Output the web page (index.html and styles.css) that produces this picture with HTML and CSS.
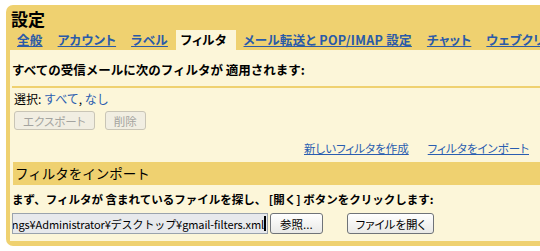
FILE: index.html
```html
<!DOCTYPE html>
<html lang="ja">
<head>
  <meta charset="UTF-8" />
  <title>設定 - フィルタ</title>
  <link rel="stylesheet" href="styles.css">
</head>
<body>
  <div class="settings">
    <h1 class="title">設定</h1>

    <nav class="tabs">
      <a class="tab" href="#">全般</a>
      <a class="tab" href="#">アカウント</a>
      <a class="tab" href="#">ラベル</a>
      <span class="tab active">フィルタ</span>
      <a class="tab" href="#">メール転送と POP/IMAP 設定</a>
      <a class="tab" href="#">チャット</a>
      <a class="tab" href="#">ウェブクリップ</a>
    </nav>

    <div class="panel">
      <div class="intro">すべての受信メールに次のフィルタが 適用されます:</div>

      <div class="filters">
        <div class="select">選択: <a href="#">すべて</a>, <a href="#">なし</a></div>
        <div class="actions">
          <button class="btn" disabled>エクスポート</button>
          <button class="btn" disabled>削除</button>
        </div>
        <div class="links">
          <a href="#">新しいフィルタを作成</a>
          <a href="#">フィルタをインポート</a>
        </div>
      </div>

      <h2 class="section-title">フィルタをインポート</h2>

      <div class="import">
        <p class="hint">まず、フィルタが 含まれているファイルを探し、 [開く] ボタンをクリックします:</p>
        <div class="file-row">
          <div class="file-path"><span>C:¥Documents and Settings¥Administrator¥デスクトップ¥gmail-filters.xml</span><i class="caret"></i></div>
          <button class="btn btn-raised">参照...</button>
          <button class="btn btn-raised open">ファイルを開く</button>
        </div>
      </div>
    </div>
  </div>
</body>
</html>
```

FILE: styles.css
```css
* {
  box-sizing: border-box;
  margin: 0;
  padding: 0;
}

body {
  background: #ffffff;
  color: #000000;
  font-family: "Noto Sans CJK JP", "Liberation Sans", sans-serif;
  font-size: 12px;
  padding: 5px 0 0 6px;
  overflow: hidden;
}

a {
  color: #2a5db0;
}

.settings {
  background: #efd170;
  border-radius: 7px 0 0 7px;
  padding: 0 0 5px 4px;
}

.title {
  font-size: 17px;
  font-weight: bold;
  line-height: 20px;
  padding: 4px 0 1px 1px;
}

.tabs {
  display: flex;
  align-items: flex-end;
  gap: 1px;
  height: 20px;
  overflow: hidden;
  font-feature-settings: "palt";
}

.tab {
  font-size: 12.5px;
  font-weight: bold;
  letter-spacing: 0.3px;
  line-height: 20px;
  padding: 0 7px;
  color: #2a5aa8;
  white-space: nowrap;
}

.tab.active {
  background: #fcf6d9;
  color: #000000;
  padding: 0 9px 0 5px;
}

.panel {
  background: #fcf6d9;
  padding-left: 2px;
}

.intro {
  font-size: 12.5px;
  font-weight: bold;
  line-height: 16px;
  padding: 12px 0 8px 0;
  border-bottom: 2px solid #efd170;
}

.filters {
  padding: 3px 0 7px 2px;
}

.select {
  line-height: 16px;
}

.select a {
  text-decoration: none;
}

.actions {
  display: flex;
  gap: 10px;
  margin-top: 4px;
}

.btn {
  font-family: inherit;
  font-size: 11.5px;
  font-feature-settings: "palt";
  height: 19px;
  padding: 0 8px;
  border: 1px solid #c9c5b6;
  border-radius: 3px;
  background: #f1eee2;
  color: #a4a4a0;
}

.links {
  display: flex;
  justify-content: flex-end;
  gap: 19px;
  padding: 11px 11px 0 0;
  font-size: 11.5px;
  font-feature-settings: "palt";
  line-height: 14px;
}

.section-title {
  background: #efd170;
  font-size: 13.5px;
  font-weight: normal;
  line-height: 23px;
  padding: 0 0 0 2px;
  margin-left: 1px;
}

.import {
  padding: 6px 0 7px 0;
}

.hint {
  font-size: 11.5px;
  font-weight: bold;
  line-height: 16px;
}

.file-row {
  display: flex;
  align-items: center;
  margin-top: 6px;
}

.file-path {
  flex: none;
  width: 256px;
  height: 21px;
  display: flex;
  justify-content: flex-end;
  align-items: center;
  overflow: hidden;
  white-space: nowrap;
  background: #e7e9ec;
  border: 1px solid #9aa3ad;
  font-size: 11px;
  letter-spacing: -0.1px;
  padding-right: 1px;
}

.caret {
  flex: none;
  width: 2px;
  height: 15px;
  background: #000000;
}

.btn-raised {
  height: 21px;
  margin-left: 2px;
  padding: 0 9px;
  color: #000000;
  border: 1px solid #6f7378;
  background: linear-gradient(#ffffff, #e9e9e6);
}

.btn-raised.open {
  margin-left: 24px;
  padding: 0 8px;
}
```
